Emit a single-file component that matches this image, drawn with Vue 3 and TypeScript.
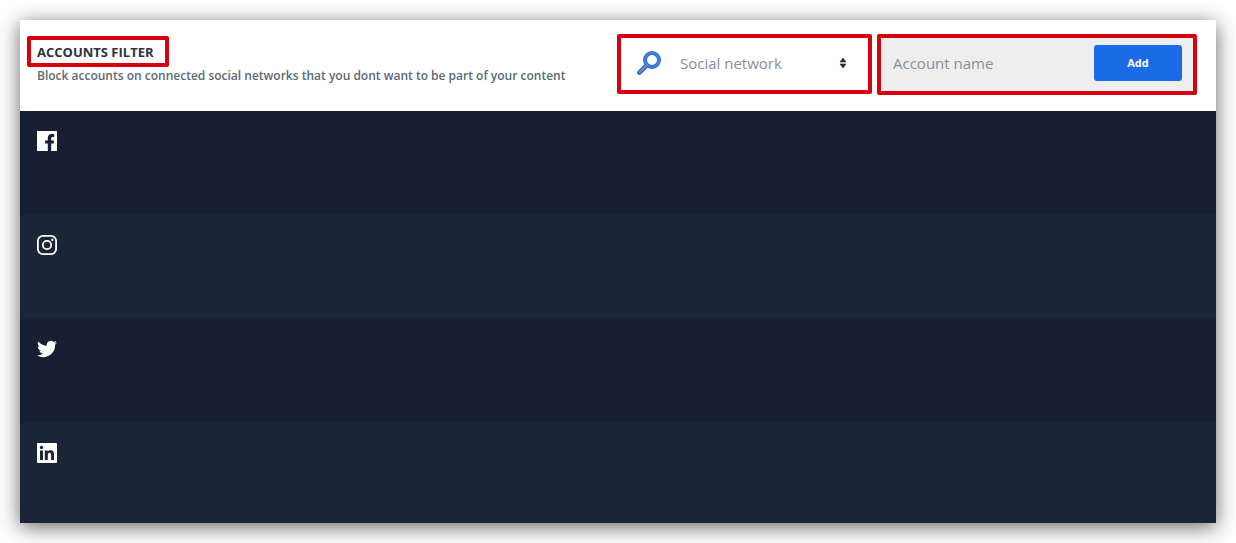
<script setup lang="ts">
import { ref } from 'vue'

interface Network {
  id: string
  label: string
  path: string
}

const networks: Network[] = [
  {
    id: 'facebook',
    label: 'Facebook',
    path: 'M0 0H20V20H14.2V12.5H16.7L17.1 9.4H14.2V7.5C14.2 6.5 14.5 6 15.6 6H17.2V3.2C16.8 3.1 15.9 3 14.8 3C12.4 3 10.8 4.4 10.8 7V9.4H8.1V12.5H10.8V20H0Z',
  },
  {
    id: 'instagram',
    label: 'Instagram',
    path: 'M6 0H14A6 6 0 0 1 20 6V14A6 6 0 0 1 14 20H6A6 6 0 0 1 0 14V6A6 6 0 0 1 6 0ZM6 1.8A4.2 4.2 0 0 0 1.8 6V14A4.2 4.2 0 0 0 6 18.2H14A4.2 4.2 0 0 0 18.2 14V6A4.2 4.2 0 0 0 14 1.8ZM10 4.9A5.1 5.1 0 1 1 10 15.1A5.1 5.1 0 1 1 10 4.9ZM10 6.7A3.3 3.3 0 1 0 10 13.3A3.3 3.3 0 1 0 10 6.7ZM15.3 3.5A1.2 1.2 0 1 1 15.3 5.9A1.2 1.2 0 1 1 15.3 3.5Z',
  },
  {
    id: 'twitter',
    label: 'Twitter',
    path: 'M20 3.8C19.3 4.1 18.5 4.3 17.6 4.4C18.5 3.9 19.1 3.1 19.4 2.1C18.6 2.6 17.7 2.9 16.8 3.1A4.1 4.1 0 0 0 9.8 6.8C6.4 6.6 3.4 5 1.4 2.5A4.1 4.1 0 0 0 2.7 8C2 8 1.4 7.8 .8 7.5C.8 9.5 2.2 11.2 4.1 11.6C3.5 11.8 2.9 11.8 2.3 11.7C2.8 13.3 4.3 14.5 6.1 14.5A8.3 8.3 0 0 1 0 16.2A11.7 11.7 0 0 0 18 5.8C18.8 5.3 19.5 4.6 20 3.8Z',
  },
  {
    id: 'linkedin',
    label: 'LinkedIn',
    path: 'M1 0H19Q20 0 20 1V19Q20 20 19 20H1Q0 20 0 19V1Q0 0 1 0ZM3 7.5V17H6V7.5ZM4.5 2.8A1.7 1.7 0 1 0 4.5 6.2A1.7 1.7 0 1 0 4.5 2.8ZM7.8 7.5V17H10.8V12.3C10.8 11 11.1 9.8 12.6 9.8C14 9.8 14.1 11.1 14.1 12.4V17H17V11.8C17 9.2 16.4 7.3 13.5 7.3C12.1 7.3 11.1 8 10.7 8.8V7.5Z',
  },
]

const selected = ref('')
const accountName = ref('')
const blocked = ref<Record<string, string[]>>({})

function addAccount(): void {
  const name = accountName.value.trim()
  if (!selected.value || !name) return
  blocked.value[selected.value] = [...(blocked.value[selected.value] ?? []), name]
  accountName.value = ''
}
</script>

<template>
  <main class="card">
    <header class="header">
      <div class="intro">
        <h1 class="title">ACCOUNTS FILTER</h1>
        <p class="subtitle">Block accounts on connected social networks that you dont want to be part of your content</p>
      </div>
      <form class="controls" @submit.prevent="addAccount">
        <div class="network">
          <svg class="search" viewBox="0 0 24 24" aria-hidden="true">
            <path d="M9.5 14.5L2.4 21.6" stroke="#2a70d6" stroke-width="4.6" stroke-linecap="round" />
            <circle cx="15" cy="9" r="7" fill="none" stroke="#2a70d6" stroke-width="4" />
            <path d="M10.2 13.8L2.7 21.3" stroke="#7f8a98" stroke-width="2" stroke-linecap="round" />
            <circle cx="15" cy="9" r="7" fill="none" stroke="#5a8cd0" stroke-width="1.2" />
          </svg>
          <select v-model="selected" class="select" aria-label="Social network">
            <option value="" disabled>Social network</option>
            <option v-for="n in networks" :key="n.id" :value="n.id">{{ n.label }}</option>
          </select>
          <svg class="arrows" viewBox="0 0 8 12" aria-hidden="true">
            <path d="M4 1L7 5H1ZM4 11L1 7H7Z" fill="#262d3a" stroke="#262d3a" stroke-width="0.6" stroke-linejoin="round" />
          </svg>
        </div>
        <div class="account">
          <input v-model="accountName" class="input" type="text" placeholder="Account name" aria-label="Account name" />
          <button class="add" type="submit">Add</button>
        </div>
      </form>
    </header>
    <section v-for="n in networks" :key="n.id" class="row" :aria-label="n.label">
      <svg class="logo" viewBox="0 0 20 20" aria-hidden="true">
        <path :d="n.path" fill="#fff" fill-rule="evenodd" />
      </svg>
      <span v-for="name in blocked[n.id]" :key="name" class="name">{{ name }}</span>
    </section>
  </main>
</template>

<style>
body {
  background: #fff;
}
</style>

<style scoped>
.card {
  margin: 20px;
  background: #fff;
  box-shadow: 0 4px 20px rgba(0, 0, 0, 0.6);
  font-family: "Open Sans", "Noto Sans", sans-serif;
}
.header {
  display: flex;
  justify-content: space-between;
  align-items: flex-start;
  gap: 16px;
  padding: 14px 19px 16px 7px;
}
.intro {
  padding-top: 2px;
}
.title {
  display: inline-block;
  box-sizing: border-box;
  margin: 0;
  padding: 1px 11px 0 6px;
  border: 4px solid #d6000f;
  border-radius: 2px;
  color: #2b323e;
  font-size: 13px;
  font-weight: 700;
  line-height: 22px;
  white-space: nowrap;
  vertical-align: top;
}
.subtitle {
  margin: 0;
  padding-left: 10px;
  color: #5b6977;
  font-size: 12px;
  font-weight: 600;
  line-height: 18px;
}
.controls {
  display: flex;
  flex: 0 1 580px;
  gap: 5px;
}
.network,
.account {
  display: flex;
  align-items: center;
  box-sizing: border-box;
  height: 61px;
  border: 4px solid #d6000f;
  border-radius: 2px;
}
.network {
  flex: 0 1 255px;
  height: 60px;
  padding: 0 21px 2px 16px;
}
.search {
  flex: none;
  width: 24px;
  height: 24px;
}
.select,
.input {
  flex: 1;
  min-width: 0;
  margin: 0;
  padding: 0;
  border: 0;
  outline: 0;
  background: transparent;
  color: #858e9a;
  font: 400 15px/24px "Open Sans", "Noto Sans", sans-serif;
}
.select {
  appearance: none;
  align-self: stretch;
  margin-left: 19px;
}
.input::placeholder {
  color: #858e9a;
  opacity: 1;
}
.arrows {
  flex: none;
  width: 8px;
  height: 12px;
  pointer-events: none;
}
.account {
  flex: 0 1 320px;
  align-items: flex-start;
  padding: 7px 11px 0 12px;
  background: #eee;
}
.input {
  height: 36px;
}
.add {
  width: 88px;
  height: 36px;
  border: 0;
  border-radius: 3px;
  background: #1c6be6;
  color: #fff;
  font: 700 11px/16px "Open Sans", "Noto Sans", sans-serif;
  cursor: pointer;
}
.row {
  display: flex;
  gap: 16px;
  padding: 20px 17px 64px;
  background: #171f33;
  color: #fff;
  font-size: 13px;
  line-height: 20px;
}
.row:nth-of-type(even) {
  background: #1b2538;
}
.row:last-child {
  padding-bottom: 60px;
}
.logo {
  flex: none;
  width: 20px;
  height: 20px;
}
</style>
